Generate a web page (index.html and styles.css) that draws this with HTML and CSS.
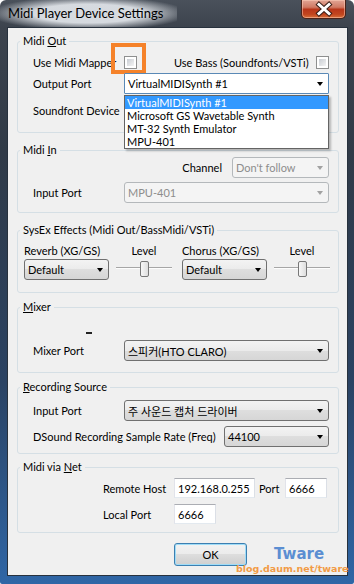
FILE: index.html
```html
<!DOCTYPE html>
<html lang="en">
<head>
  <meta charset="UTF-8">
  <title>Midi Player Device Settings</title>
  <link rel="stylesheet" href="styles.css">
</head>
<body>
  <div class="window">
    <div class="titlebar">
      <span class="title">Midi Player Device Settings</span>
      <button class="close-btn" aria-label="Close">
        <svg width="45" height="19" viewBox="0 0 45 19">
          <path d="M18 5.5 L28 14.5 M28 5.5 L18 14.5" stroke="#3b2019" stroke-width="5" stroke-linecap="square"/>
          <path d="M18 5.5 L28 14.5 M28 5.5 L18 14.5" stroke="#fff" stroke-width="3" stroke-linecap="square"/>
        </svg>
      </button>
    </div>

    <div class="client">
      <!-- Midi Out -->
      <fieldset class="group g-out">
        <legend>Midi <u>O</u>ut</legend>
        <div class="row check-row">
          <span class="lbl">Use Midi Mapper</span>
          <span class="check-wrap">
            <span class="checkbox"></span>
            <span class="highlight"></span>
          </span>
          <span class="lbl bass-lbl">Use Bass (Soundfonts/VSTi)</span>
          <span class="checkbox"></span>
        </div>
        <div class="row">
          <span class="lbl">Output Port</span>
          <div class="combo-wrap">
            <div class="combo combo-open">VirtualMIDISynth #1</div>
            <ul class="droplist">
              <li class="selected">VirtualMIDISynth #1</li>
              <li>Microsoft GS Wavetable Synth</li>
              <li>MT-32 Synth Emulator</li>
              <li>MPU-401</li>
            </ul>
          </div>
        </div>
        <div class="row soundfont-row">
          <span class="lbl">Soundfont Device</span>
          <div class="combo"></div>
        </div>
      </fieldset>

      <!-- Midi In -->
      <fieldset class="group g-in">
        <legend>Midi <u>I</u>n</legend>
        <div class="row channel-row">
          <span class="channel-lbl">Channel</span>
          <div class="combo combo-off channel-combo">Don't follow</div>
        </div>
        <div class="row input-row">
          <span class="lbl">Input Port</span>
          <div class="combo combo-off">MPU-401</div>
        </div>
      </fieldset>

      <!-- SysEx -->
      <fieldset class="group g-fx">
        <legend>SysEx Effects (Midi Out/BassMidi/VSTi)</legend>
        <div class="fx-grid">
          <span>Reverb (XG/GS)</span>
          <span class="level">Level</span>
          <span>Chorus (XG/GS)</span>
          <span class="level">Level</span>
          <div class="combo fx-combo">Default</div>
          <div class="slider"><span class="thumb"></span></div>
          <div class="combo fx-combo">Default</div>
          <div class="slider"><span class="thumb"></span></div>
        </div>
      </fieldset>

      <!-- Mixer -->
      <fieldset class="group g-mix">
        <legend><u>M</u>ixer</legend>
        <div class="mixer-dash"></div>
        <div class="row mixer-row">
          <span class="lbl">Mixer Port</span>
          <div class="combo">스피커(HTO CLARO)</div>
        </div>
      </fieldset>

      <!-- Recording -->
      <fieldset class="group g-rec">
        <legend><u>R</u>ecording Source</legend>
        <div class="row rec-row">
          <span class="lbl">Input Port</span>
          <div class="combo">주 사운드 캡처 드라이버</div>
        </div>
        <div class="row rate-row">
          <span class="lbl lbl-wide">DSound Recording Sample Rate (Freq)</span>
          <div class="combo">44100</div>
        </div>
      </fieldset>

      <!-- Net -->
      <fieldset class="group g-net">
        <legend>Midi via <u>N</u>et</legend>
        <div class="net-row host-row">
          <span class="net-lbl">Remote Host</span>
          <input class="field host-field" type="text" value="192.168.0.255">
          <span class="port-lbl">Port</span>
          <input class="field port-field" type="text" value="6666">
        </div>
        <div class="net-row local-row">
          <span class="net-lbl">Local Port</span>
          <input class="field port-field" type="text" value="6666">
        </div>
      </fieldset>

      <div class="footer">
        <button class="ok-btn">OK</button>
      </div>
    </div>

    <div class="watermark">
      <span class="wm-name">Tware</span>
      <span class="wm-url">blog.daum.net/tware</span>
    </div>
  </div>
</body>
</html>
```

FILE: styles.css
```css
* {
  box-sizing: border-box;
}

body {
  margin: 0;
  background: #fff;
  font-family: Lato, "Noto Sans CJK KR", sans-serif;
  font-size: 11px;
  color: #000;
}

.window {
  position: relative;
  width: 354px;
  height: 584px;
  display: flex;
  flex-direction: column;
  padding: 0 6px 8px 7px;
  border-radius: 6px 6px 2px 2px;
  background: linear-gradient(180deg, #4a515b 0, #3c434d 27px, #303a47 150px, #2a4262 65%, #2f66a6 100%);
}

.titlebar {
  height: 27px;
  display: flex;
  align-items: flex-start;
}

.title {
  margin-left: -7px;
  padding: 0 14px 0 8px;
  font-size: 13px;
  line-height: 27px;
  background: radial-gradient(ellipse 100px 17px at 50% 50%, rgba(222, 226, 231, 0.95) 55%, rgba(222, 226, 231, 0) 100%);
}

.close-btn {
  margin-left: auto;
  margin-right: 2px;
  width: 45px;
  height: 19px;
  padding: 0;
  border: 1px solid #4a2218;
  border-top: none;
  border-radius: 0 0 5px 5px;
  background: linear-gradient(180deg, #e2a595 0, #d07a64 40%, #b8361a 52%, #c2461f 80%, #d8703a 100%);
  box-shadow: inset 0 0 0 1px rgba(255, 210, 190, 0.5);
}

.close-btn svg {
  display: block;
  margin: -1px 0 0 -1px;
}

.client {
  flex: 1;
  display: flex;
  flex-direction: column;
  padding-top: 6px;
  background: #f0f0f0;
  border: 1px solid #27313d;
}

/* group boxes */
.group {
  margin: 0 8px 0 9px;
  padding: 0;
  min-width: 0;
  border: 1px solid #d5dfe5;
  border-radius: 3px;
}

legend {
  margin-left: 2px;
  padding: 0 3px;
  line-height: 14px;
}

.g-out { margin-top: 0; height: 99px; }
.g-in { margin-top: 10px; height: 70px; }
.g-fx { margin-top: 10px; height: 70px; }
.g-mix { margin-top: 7px; height: 73px; }
.g-rec { margin-top: 7px; height: 74px; }
.g-net { margin-top: 6px; height: 73px; }

.row {
  display: flex;
  align-items: center;
  height: 21px;
  padding: 0 9px 0 15px;
}

.lbl {
  flex: none;
  width: 91px;
  white-space: nowrap;
}

.lbl-wide {
  width: 191px;
}

.check-row { margin-top: 4px; }
.soundfont-row { margin-top: 6px; }
.channel-row { justify-content: flex-end; }
.input-row { margin-top: 4px; }
.mixer-row { margin-top: 6px; }
.rec-row { margin-top: 6px; }
.rate-row { margin-top: 5px; }

.check-wrap {
  position: relative;
  width: 13px;
  height: 13px;
}

.checkbox {
  display: block;
  flex: none;
  width: 13px;
  height: 13px;
  padding: 2px;
  border: 1px solid #8e8f8f;
  background: linear-gradient(135deg, #c9cdd3, #f4f4f4) content-box, #fff;
}

.highlight {
  position: absolute;
  left: -13px;
  top: -13px;
  width: 35px;
  height: 31px;
  border: 4px solid #f5822a;
}

.bass-lbl {
  flex: 1;
  width: auto;
  margin-left: 37px;
}

.channel-lbl {
  margin-right: 10px;
}

/* combo boxes */
.combo-wrap {
  position: relative;
  flex: 1;
}

.combo {
  flex: 1;
  display: flex;
  align-items: center;
  height: 21px;
  padding: 0 5px 0 3px;
  border: 1px solid #707070;
  border-radius: 3px;
  background: linear-gradient(180deg, #f3f3f3 0, #ebebeb 50%, #dedede 50%, #d6d6d6 100%);
  white-space: nowrap;
  overflow: hidden;
}

.combo::after {
  content: "";
  margin-left: auto;
  border-left: 3.5px solid transparent;
  border-right: 3.5px solid transparent;
  border-top: 4px solid #000;
}

.combo-open {
  border-color: #5a89b6;
  border-radius: 1px;
  background: #fff;
}

.combo-off {
  border-color: #b4b8bb;
  background: #f4f4f4;
  color: #8d8d8d;
}

.combo-off::after {
  border-top-color: #a2a2a2;
}

.channel-combo {
  flex: none;
  width: 97px;
}

.droplist {
  position: absolute;
  left: 0;
  top: 22px;
  width: 205px;
  margin: 0;
  padding: 0;
  list-style: none;
  background: #fff;
  border: 1px solid #646464;
  box-shadow: 2px 2px 2px rgba(0, 0, 0, 0.25);
}

.droplist li {
  height: 13px;
  padding-left: 2px;
  line-height: 13px;
  white-space: nowrap;
}

.droplist .selected {
  background: #3399ff;
  color: #fff;
}

/* sysex */
.fx-grid {
  display: grid;
  grid-template-columns: 92px 66px 92px 56px;
  grid-template-rows: 14px 21px;
  row-gap: 1px;
  margin-top: 7px;
  padding-left: 6px;
}

.fx-grid > span {
  line-height: 14px;
  white-space: nowrap;
}

.fx-grid .level {
  width: 56px;
  text-align: center;
}

.fx-combo {
  width: 85px;
}

.slider {
  width: 56px;
  height: 21px;
  display: flex;
  align-items: flex-start;
  background: linear-gradient(180deg, transparent 8px, #a6a6a6 8px, #a6a6a6 9px, #fdfdfd 9px, #fdfdfd 10px, transparent 10px);
}

.thumb {
  width: 9px;
  height: 16px;
  margin: 2px 0 0 24px;
  border: 1px solid #777;
  border-radius: 2px;
  background: linear-gradient(90deg, #f7f7f7, #dedede);
}

/* mixer */
.mixer-dash {
  width: 6px;
  height: 2px;
  margin: 18px 0 0 68px;
  background: #222;
}

/* net */
.net-row {
  display: flex;
  align-items: center;
  height: 20px;
  padding-left: 85px;
}

.host-row { margin-top: 4px; }
.local-row { margin-top: 6px; }

.net-lbl {
  width: 71px;
}

.port-lbl {
  width: 26px;
  margin-left: 4px;
}

.field {
  height: 20px;
  padding: 0 3px;
  border: 1px solid;
  border-color: #abadb3 #dbdfe6 #e3e9ef #e2e3ea;
  background: #fff;
  font: inherit;
  color: #000;
  outline: none;
}

.host-field { width: 81px; }
.port-field { width: 42px; }

/* footer */
.footer {
  display: flex;
  margin-top: 10px;
  padding-left: 166px;
}

.ok-btn {
  width: 73px;
  height: 23px;
  padding: 0;
  font: inherit;
  border: 1px solid #3c7fb1;
  border-radius: 3px;
  background: linear-gradient(180deg, #f2f2f2 0, #ebebeb 50%, #dddddd 50%, #cfcfcf 100%);
  box-shadow: inset 0 0 0 1px #9fdcf7;
}

/* watermark */
.watermark {
  position: absolute;
  left: 236px;
  top: 547px;
  width: 112px;
  display: flex;
  flex-direction: column;
  font-family: "DejaVu Sans", sans-serif;
  font-weight: bold;
}

.wm-name {
  margin-left: 38px;
  font-size: 15px;
  line-height: 15px;
  color: #5b8ed2;
}

.wm-url {
  margin-top: 2px;
  font-size: 9.5px;
  line-height: 10px;
  color: #f29b45;
  white-space: nowrap;
}
```
